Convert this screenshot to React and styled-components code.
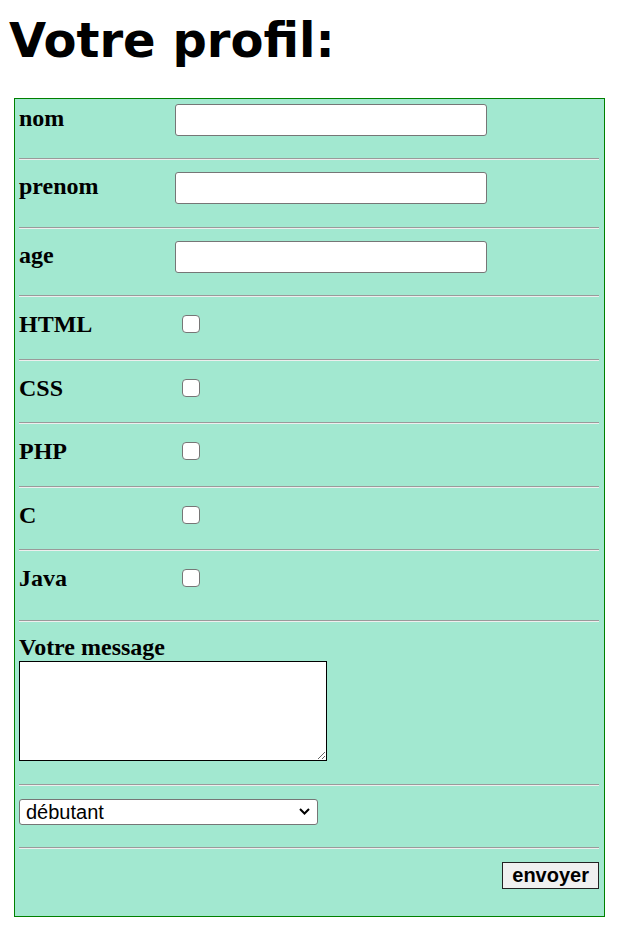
import React from "react";
import styled, { createGlobalStyle } from "styled-components";

const Global = createGlobalStyle`
  html, body { margin: 0; padding: 0; background: #ffffff; }
  body { font-family: "Liberation Serif", serif; color: #000; }
`;

const Page = styled.div`
  padding-top: 12px;
`;

const Title = styled.h1`
  margin: 0 0 30px 9px;
  font-family: "DejaVu Sans", sans-serif;
  font-weight: bold;
  font-size: 48px;
  line-height: 56px;
`;

const Form = styled.form`
  box-sizing: border-box;
  width: 591px;
  margin-left: 14px;
  padding: 1px 5px 0 4px;
  border: 1px solid #008000;
  background: #a2e8d0;
`;

const Row = styled.div`
  box-sizing: border-box;
  display: grid;
  grid-template-columns: 156px 1fr;
  align-items: start;
  height: ${(p) => p.$h}px;
  padding-top: ${(p) => p.$pt}px;
`;

const Label = styled.label`
  display: block;
  font-family: "Liberation Serif", serif;
  font-weight: bold;
  font-size: 24px;
  line-height: 27px;
  margin-top: ${(p) => p.$mt || 0}px;
`;

const TextInput = styled.input`
  box-sizing: border-box;
  width: 312px;
  height: 32px;
  margin: 0;
  border: 1px solid #767676;
  border-radius: 3px;
  background: #fff;
  font-family: "Liberation Sans", sans-serif;
  font-size: 16px;
  padding: 0 4px;
`;

const Check = styled.input`
  appearance: none;
  -webkit-appearance: none;
  box-sizing: border-box;
  width: 18px;
  height: 18px;
  margin: 3.5px 0 0 6.5px;
  border: 1.5px solid #767676;
  border-radius: 4px;
  background: #fff;
`;

const Divider = styled.hr`
  box-sizing: content-box;
  height: 0;
  margin: 8px 0;
  border: 0;
  border-top: 1px solid #9a9a9a;
  border-bottom: 1px solid #eeeeee;
`;

const Block = styled.div`
  box-sizing: border-box;
  display: flex;
  flex-direction: column;
  align-items: ${(p) => (p.$right ? "flex-end" : "flex-start")};
  height: ${(p) => p.$h}px;
  padding-top: ${(p) => p.$pt}px;
`;

const Message = styled.textarea`
  box-sizing: border-box;
  display: block;
  width: 308px;
  height: 100px;
  margin: 0;
  border: 1px solid #000;
  border-radius: 0;
  background: #fff;
  font-family: "Liberation Mono", monospace;
  font-size: 13px;
`;

const SelectWrap = styled.div`
  position: relative;
  width: 299px;
  height: 26px;
`;

const Level = styled.select`
  appearance: none;
  -webkit-appearance: none;
  box-sizing: border-box;
  width: 100%;
  height: 100%;
  margin: 0;
  border: 1px solid #767676;
  border-radius: 3px;
  background: #fff;
  font-family: "Liberation Sans", Arial, sans-serif;
  font-size: 20px;
  color: #000;
  padding: 0 24px 0 6px;
  outline: none;
`;

const Chevron = styled.svg`
  position: absolute;
  right: 8px;
  top: 9px;
  width: 11px;
  height: 7px;
  pointer-events: none;
`;

const Submit = styled.button`
  box-sizing: border-box;
  height: 27px;
  margin: 0;
  padding: 0 9px;
  border: 1px solid #222;
  border-radius: 0;
  background: #f0f0f0;
  font-family: "Liberation Sans", Arial, sans-serif;
  font-weight: bold;
  font-size: 20px;
  line-height: 23px;
  color: #000;
`;

const textFields = [
  { name: "nom", h: 50 },
  { name: "prenom", h: 51 },
  { name: "age", h: 50 },
];

const skills = [
  { name: "HTML", h: 46 },
  { name: "CSS", h: 45 },
  { name: "PHP", h: 46 },
  { name: "C", h: 45 },
  { name: "Java", h: 53 },
];

export default function App() {
  return (
    <>
      <Global />
      <Page>
        <Title>Votre profil:</Title>
        <Form onSubmit={(e) => e.preventDefault()}>
          {textFields.map((f) => (
            <React.Fragment key={f.name}>
              <Row $h={f.h} $pt={4}>
                <Label $mt={1}>{f.name}</Label>
                <TextInput type="text" />
              </Row>
              <Divider />
            </React.Fragment>
          ))}
          {skills.map((s) => (
            <React.Fragment key={s.name}>
              <Row $h={s.h} $pt={6}>
                <Label>{s.name}</Label>
                <Check type="checkbox" />
              </Row>
              <Divider />
            </React.Fragment>
          ))}
          <Block $h={146} $pt={4}>
            <Label>Votre message</Label>
            <Message />
          </Block>
          <Divider />
          <Block $h={45} $pt={5}>
            <SelectWrap>
              <Level defaultValue="debutant">
                <option value="debutant">débutant</option>
                <option value="intermediaire">intermédiaire</option>
                <option value="expert">expert</option>
              </Level>
              <Chevron viewBox="0 0 11 7">
                <path d="M1 1 L5.5 5.5 L10 1" fill="none" stroke="#000" strokeWidth="2" />
              </Chevron>
            </SelectWrap>
          </Block>
          <Divider />
          <Block $h={59} $pt={5} $right>
            <Submit type="submit">envoyer</Submit>
          </Block>
        </Form>
      </Page>
    </>
  );
}
